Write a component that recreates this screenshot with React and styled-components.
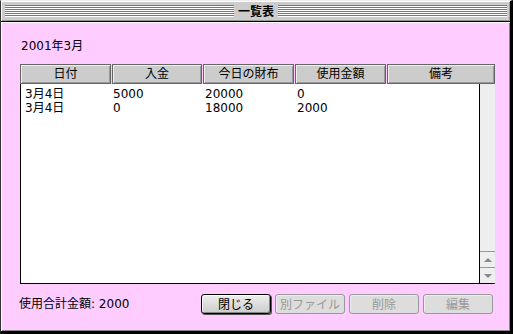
import React from "react"
import styled, { createGlobalStyle } from "styled-components"

const Global = createGlobalStyle`
  html, body {
    margin: 0;
    padding: 0;
    background: #fff;
  }
  body {
    font-family: "DejaVu Sans", "Noto Sans CJK JP", sans-serif;
    font-size: 12px;
    color: #000;
  }
`

const Window = styled.div`
  width: 513px;
  height: 334px;
  box-sizing: border-box;
  border-left: 1px solid #333;
  border-top: 1px solid #eee;
  border-right: 3px solid #000;
  border-bottom: 3px solid #000;
  display: flex;
  flex-direction: column;
`

const TitleBar = styled.div`
  flex: none;
  box-sizing: border-box;
  background: #cccccc;
  box-shadow: inset 1px 1px 0 #fff, inset -1px -1px 0 #999;
  border-bottom: 1px solid #000;
  height: 21px;
  display: flex;
  align-items: center;
  padding: 0 3px 0 4px;
`

const Stripes = styled.div`
  flex: 1;
  height: 12px;
  background: repeating-linear-gradient(
    to bottom,
    #777 0,
    #777 1px,
    #fff 1px,
    #fff 2px
  );
`

const Title = styled.div`
  font-family: "Noto Sans CJK JP", sans-serif;
  font-weight: bold;
  font-size: 12px;
  line-height: 14px;
  padding: 0 4px;
`

const Content = styled.div`
  flex: 1;
  background: #ffccff;
  box-shadow: inset 1px 1px 0 #fff, inset -1px -1px 0 #888;
  padding: 17px 0 0 18px;
  display: flex;
  flex-direction: column;
`

const DateLabel = styled.div`
  line-height: 14px;
  margin-left: 2px;
`

const List = styled.div`
  margin-top: 11px;
  margin-left: 1px;
  width: 475px;
`

const HeaderRow = styled.div`
  display: flex;
  gap: 1px;
  height: 20px;
`

const HeaderCell = styled.div`
  width: ${(p) => p.w}px;
  flex: none;
  box-sizing: border-box;
  background: #cccccc;
  border: 1px solid #666;
  box-shadow: inset 1px 1px 0 #eee, inset -1px -1px 0 #999;
  text-align: center;
  line-height: 18px;
`

const Body = styled.div`
  height: 200px;
  box-sizing: border-box;
  background: #fff;
  border-left: 1px solid #000;
  border-bottom: 1px solid #000;
  border-right: 1px solid #777;
  display: flex;
`

const Rows = styled.div`
  flex: 1;
  padding-top: 3px;
`

const Row = styled.div`
  display: flex;
  height: 14px;
  line-height: 14px;
`

const Cell = styled.div`
  width: ${(p) => p.w}px;
  flex: none;
  box-sizing: border-box;
  padding-left: ${(p) => p.pad}px;
`

const ScrollBar = styled.div`
  width: 15px;
  flex: none;
  background: #eeeeee;
  border-left: 1px solid #000;
  display: flex;
  flex-direction: column;
  justify-content: flex-end;
`

const Arrow = styled.div`
  height: 15px;
  border-top: 1px solid #999;
  display: flex;
  align-items: center;
  justify-content: center;
  &::after {
    content: "";
    border-left: 4px solid transparent;
    border-right: 4px solid transparent;
    ${(p) => (p.up ? "border-bottom: 4px solid #888;" : "border-top: 4px solid #888;")}
  }
`

const Footer = styled.div`
  margin-top: 10px;
  width: 476px;
  display: flex;
  align-items: center;
  justify-content: space-between;
`

const Total = styled.div`
  line-height: 14px;
`

const Buttons = styled.div`
  display: flex;
  gap: 4px;
  padding-right: 2px;
`

const Button = styled.button`
  width: 70px;
  height: 20px;
  box-sizing: border-box;
  font-family: "Noto Sans CJK JP", sans-serif;
  font-size: 12px;
  line-height: 16px;
  padding: 0;
  border-radius: 3px;
  border: 1px solid ${(p) => (p.disabled ? "#999" : "#000")};
  color: ${(p) => (p.disabled ? "#999" : "#000")};
  background: ${(p) => (p.disabled ? "#dddddd" : "linear-gradient(#eeeeee, #cccccc)")};
  box-shadow: ${(p) =>
    p.disabled
      ? "inset 1px 1px 0 #eee"
      : "inset 1px 1px 0 #fff, inset -1px -1px 0 #888, 1px 1px 0 #555"};
`

const columns = [
  { label: "日付", w: 91, pad: 4 },
  { label: "入金", w: 91, pad: 1 },
  { label: "今日の財布", w: 92, pad: 2 },
  { label: "使用金額", w: 92, pad: 2 },
  { label: "備考", w: 92, pad: 2 },
]

const data = [
  ["3月4日", "5000", "20000", "0", ""],
  ["3月4日", "0", "18000", "2000", ""],
]

const headerWidths = [91, 90, 91, 91, 108]

export default function App() {
  return (
    <>
      <Global />
      <Window>
        <TitleBar>
          <Stripes />
          <Title>一覧表</Title>
          <Stripes />
        </TitleBar>
        <Content>
          <DateLabel>2001年3月</DateLabel>
          <List>
            <HeaderRow>
              {columns.map((c, i) => (
                <HeaderCell key={c.label} w={headerWidths[i]}>
                  {c.label}
                </HeaderCell>
              ))}
            </HeaderRow>
            <Body>
              <Rows>
                {data.map((r, i) => (
                  <Row key={i}>
                    {r.map((v, j) => (
                      <Cell key={j} w={columns[j].w} pad={columns[j].pad}>
                        {v}
                      </Cell>
                    ))}
                  </Row>
                ))}
              </Rows>
              <ScrollBar>
                <Arrow up />
                <Arrow />
              </ScrollBar>
            </Body>
          </List>
          <Footer>
            <Total>使用合計金額: 2000</Total>
            <Buttons>
              <Button>閉じる</Button>
              <Button disabled>別ファイル</Button>
              <Button disabled>削除</Button>
              <Button disabled>編集</Button>
            </Buttons>
          </Footer>
        </Content>
      </Window>
    </>
  )
}
